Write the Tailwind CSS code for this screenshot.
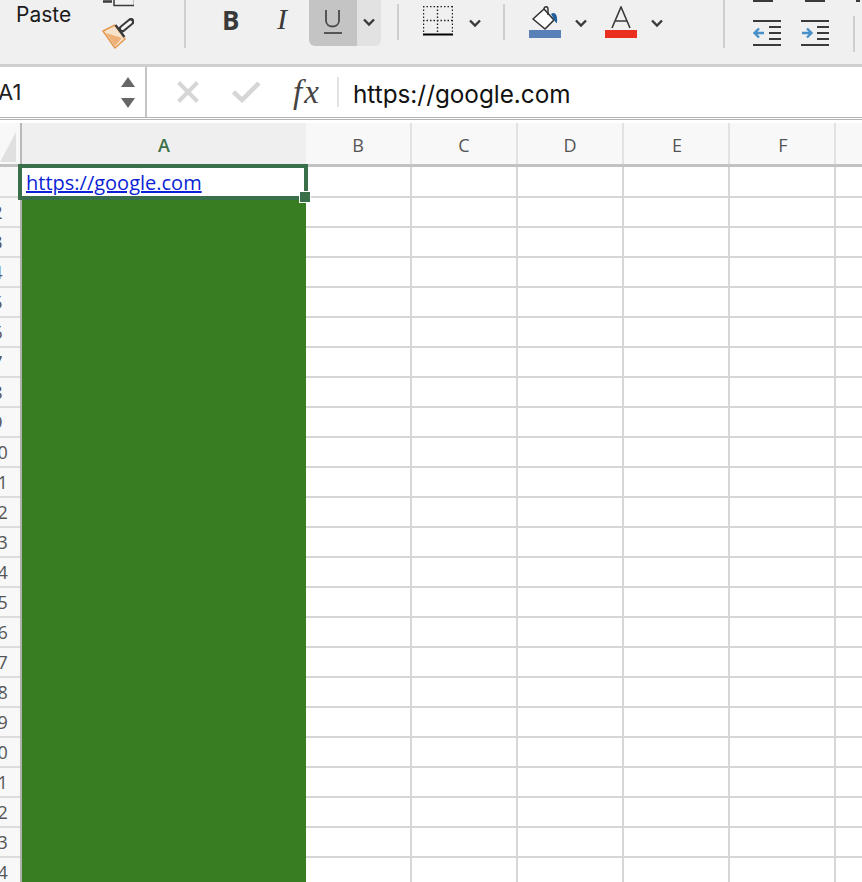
<!DOCTYPE html>
<html lang="en">
<head>
  <meta charset="UTF-8" />
  <title>Sheet</title>
  <script src="https://cdn.jsdelivr.net/npm/@tailwindcss/browser@4"></script>
</head>
<body class="w-[862px] h-[882px] overflow-hidden bg-white font-['Open_Sans',sans-serif]">

  <!-- Ribbon -->
  <header class="h-[64px] bg-[#f0f0f0] flex items-start overflow-hidden text-[#3a3a3a]">
    <span class="ml-[16px] mt-[2px] w-[86px] text-[21px] leading-[26px] text-[#1c1c1c] font-['Inter',sans-serif]">Paste</span>

    <div class="w-[32px] flex flex-col items-start">
      <svg width="32" height="7" viewBox="0 0 32 7" fill="none" stroke="#3a3a3a" stroke-width="1.5">
        <path d="M12 -1V5.5H32.5V-1" />
        <path d="M1 1.5H10" stroke-width="2.5" />
      </svg>
      <svg class="mt-[11px]" width="32" height="31" viewBox="0 0 32 31" fill="none">
        <path d="M1 13L13 7L23 21L13 30Z" fill="#f7e3cc" stroke="#e39a52" stroke-width="1.6" stroke-linejoin="round" />
        <path d="M4 15L20 20L13 28Z" fill="#eeb077" />
        <path d="M13 7L15 5L24 17L22 20Z" fill="#fff" />
        <path d="M13.5 7L22.5 19" stroke="#3a3a3a" stroke-width="2.4" />
        <path d="M20 11L29 3.5" stroke="#3a3a3a" stroke-width="7" stroke-linecap="round" />
        <path d="M20.5 10.5L28.5 4" stroke="#f4f4f4" stroke-width="3" stroke-linecap="round" />
      </svg>
    </div>

    <div class="ml-[50px] w-[2px] h-[48px] bg-[#cfcfcf]"></div>

    <span class="ml-[36px] mt-[2px] w-[41px] text-[26px] leading-[36px] font-bold font-['Open_Sans',sans-serif]">B</span>
    <span class="mt-[1px] w-[46px] pl-[14px] text-[30px] leading-[36px] italic font-['Liberation_Serif',serif]">I</span>

    <div class="w-[48px] h-[46px] bg-[#c4c4c4] rounded-bl-md flex flex-col items-center">
      <svg class="mt-[10px]" width="20" height="25" viewBox="0 0 20 25" fill="none" stroke="#4a4a4a">
        <path d="M3 0V10.5C3 18.5 16 18.5 16 10.5V0" stroke-width="1.8" />
        <path d="M1 23H19" stroke-width="1.8" />
      </svg>
    </div>
    <div class="w-[24px] h-[46px] bg-[#e2e2e2] rounded-br-md flex justify-center pt-[18px]">
      <svg width="12" height="9" viewBox="0 0 12 9" fill="none" stroke="#3a3a3a" stroke-width="2.4"><path d="M1 1.5L6 6.5L11 1.5" /></svg>
    </div>

    <div class="ml-[16px] mt-[4px] w-[2px] h-[36px] bg-[#cfcfcf]"></div>

    <svg class="ml-[24px] mt-[6px]" width="30" height="30" viewBox="0 0 30 30" fill="none" stroke="#222">
      <path d="M0.5 0V28M29.5 0V28M0 0.5H30M0 14.5H30M14.5 0V28" stroke-width="1.4" stroke-dasharray="1.5 2" />
      <path d="M0 28.5H30" stroke="#000" stroke-width="2" />
    </svg>
    <svg class="ml-[16px] mt-[19px]" width="12" height="9" viewBox="0 0 12 9" fill="none" stroke="#3a3a3a" stroke-width="2.4"><path d="M1 1.5L6 6.5L11 1.5" /></svg>

    <div class="ml-[22px] mt-[4px] w-[2px] h-[36px] bg-[#cfcfcf]"></div>

    <div class="ml-[24px] w-[32px] flex flex-col items-center">
      <svg class="mt-[6px]" width="28" height="24" viewBox="0 0 28 24" fill="none">
        <path d="M2 13L13 3L23 14L14 23Z" fill="#fff" stroke="#333" stroke-width="1.6" stroke-linejoin="round" />
        <path d="M13 3C13 0 17 0 17 3V9" stroke="#333" stroke-width="1.4" />
        <path d="M20 8C24 5 27 9 26 17C24 17 23 13 20 8Z" fill="#23609f" />
      </svg>
      <div class="w-[32px] h-[8px] bg-[#5a80b8]"></div>
    </div>
    <svg class="ml-[14px] mt-[19px]" width="12" height="9" viewBox="0 0 12 9" fill="none" stroke="#3a3a3a" stroke-width="2.4"><path d="M1 1.5L6 6.5L11 1.5" /></svg>

    <div class="ml-[18px] w-[32px] flex flex-col items-center">
      <svg class="mt-[6px]" width="22" height="24" viewBox="0 0 22 24" fill="none" stroke="#3a3a3a" stroke-width="1.6">
        <path d="M2 22L11 1L20 22M5 15H17" />
      </svg>
      <div class="w-[32px] h-[8px] bg-[#ea2f1f]"></div>
    </div>
    <svg class="ml-[14px] mt-[19px]" width="12" height="9" viewBox="0 0 12 9" fill="none" stroke="#3a3a3a" stroke-width="2.4"><path d="M1 1.5L6 6.5L11 1.5" /></svg>

    <div class="ml-[60px] w-[2px] h-[48px] bg-[#cfcfcf]"></div>

    <!-- Indent buttons, with the cut off row above them -->
    <div class="ml-[28px] w-[28px]">
      <div class="w-[20px] h-[2px] bg-[#3a3a3a]"></div>
      <svg class="mt-[18px]" width="28" height="26" viewBox="0 0 28 26" fill="none">
        <path d="M0 1H28M0 25H28M16 7H28M16 13H28M16 19H28" stroke="#3a3a3a" stroke-width="2" />
        <path d="M11 13H2M6 8.5L1.5 13L6 17.5" stroke="#4a90c8" stroke-width="2.4" />
      </svg>
    </div>
    <div class="ml-[20px] w-[28px]">
      <div class="ml-[4px] w-[20px] h-[2px] bg-[#3a3a3a]"></div>
      <svg class="mt-[18px]" width="28" height="26" viewBox="0 0 28 26" fill="none">
        <path d="M0 1H28M0 25H28M16 7H28M16 13H28M16 19H28" stroke="#3a3a3a" stroke-width="2" />
        <path d="M1 13H10M6 8.5L10.5 13L6 17.5" stroke="#4a90c8" stroke-width="2.4" />
      </svg>
    </div>
    <div class="ml-[24px] w-[2px]">
      <div class="mt-[16px] w-[2px] h-[36px] bg-[#cfcfcf]"></div>
    </div>
    <div class="ml-[1px] w-[4px] h-[2px] bg-[#3a3a3a]"></div>
  </header>

  <!-- Formula bar -->
  <div class="h-[59px] border-t-[3px] border-t-[#cfcfcf] flex flex-col">
    <div class="h-[50px] flex items-center bg-white">
      <div class="w-[145px] h-full flex items-center">
        <span class="-ml-[2px] w-[122px] text-[22px] text-[#222] font-['Inter',sans-serif]">A1</span>
        <div class="w-[16px] flex flex-col items-center gap-[11px]">
          <div class="w-0 h-0 border-x-[7px] border-x-transparent border-b-[10px] border-b-[#666]"></div>
          <div class="w-0 h-0 border-x-[7px] border-x-transparent border-t-[10px] border-t-[#666]"></div>
        </div>
      </div>
      <div class="w-[2px] h-full bg-[#c4c4c4]"></div>
      <svg class="ml-[30px]" width="22" height="22" viewBox="0 0 22 22" fill="none" stroke="#d6d6d6" stroke-width="4"><path d="M1.5 1.5L20.5 20.5M20.5 1.5L1.5 20.5" /></svg>
      <svg class="ml-[33px]" width="29" height="22" viewBox="0 0 29 22" fill="none" stroke="#d6d6d6" stroke-width="4.5"><path d="M1.5 11L10 19L27 2" /></svg>
      <span class="ml-[32px] w-[44px] text-[33px] leading-[40px] italic tracking-[2px] text-[#444] font-['Liberation_Serif',serif]">fx</span>
      <div class="w-[2px] h-[30px] bg-[#e4e4e4]"></div>
      <span class="ml-[14px] mt-[5px] text-[24.3px] text-[#111] font-['Inter',sans-serif]">https://google.com</span>
    </div>
    <div class="h-[3px] border-t border-b border-[#b4b4b4] bg-white"></div>
  </div>

  <!-- Sheet -->
  <div class="relative">
    <div id="colHeads" class="h-[44px] flex border-b-[3px] border-b-[#c2c2c2] bg-[#f8f8f8] text-[18px] text-[#555]">
      <div class="w-[22px] border-r-2 border-r-[#b8b8b8] relative">
        <div class="mt-[9px] w-0 h-0 border-l-[16px] border-l-transparent border-b-[30px] border-b-[#e0e0e0]"></div>
      </div>
      <div class="w-[284px] bg-[#efefef] text-[#3b7048] font-semibold flex items-center justify-center pt-[3px]">A</div>
      <div class="w-[106px] border-r-2 border-r-[#e2e2e2] flex items-center justify-center pt-[3px]">B</div>
      <div class="w-[106px] border-r-2 border-r-[#e2e2e2] flex items-center justify-center pt-[3px]">C</div>
      <div class="w-[106px] border-r-2 border-r-[#e2e2e2] flex items-center justify-center pt-[3px]">D</div>
      <div class="w-[106px] border-r-2 border-r-[#e2e2e2] flex items-center justify-center pt-[3px] pl-[2px]">E</div>
      <div class="w-[106px] border-r-2 border-r-[#e2e2e2] flex items-center justify-center pt-[3px] pl-[2px]">F</div>
    </div>

    <div id="rows"></div>

    <!-- Active cell A1 -->
    <div class="absolute left-[18px] top-[41px] w-[290px] h-[36px] border-[4px] border-[#39704a] bg-white text-[20px] leading-[29px] pl-[4px] text-[#0b1fd6] underline">https://google.com</div>
    <div class="absolute left-[299px] top-[68px] w-[12px] h-[12px] bg-[#39704a] border border-white"></div>
  </div>

  <script>
    const rows = document.getElementById("rows");
    for (let i = 1; i <= 24; i++) {
      const first = i === 1 ? "h-[31px]" : "h-[30px]";
      let html = `<div class="-ml-[25px] w-[45px] shrink-0 bg-[#f8f8f8] border-b-2 border-b-[#dcdcdc] flex items-center justify-center text-[18px] text-[#555]">${i}</div>`;
      html += `<div class="w-[2px] shrink-0 bg-[#b0b0b0]"></div>`;
      html += `<div class="w-[284px] shrink-0 bg-[#397d22]"></div>`;
      for (let c = 0; c < 6; c++) {
        html += `<div class="w-[106px] shrink-0 border-r-2 border-r-[#d6d6d6] border-b-2 border-b-[#d6d6d6]"></div>`;
      }
      const row = document.createElement("div");
      row.className = "flex w-[900px] " + first;
      row.innerHTML = html;
      rows.appendChild(row);
    }
  </script>
</body>
</html>
